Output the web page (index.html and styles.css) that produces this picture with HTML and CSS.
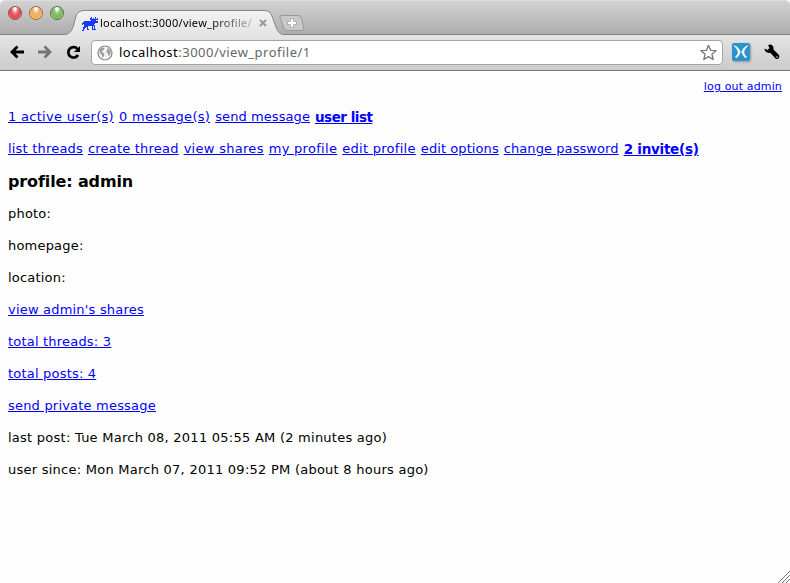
FILE: index.html
```html
<!DOCTYPE html>
<html lang="en">
<head>
<meta charset="utf-8">
<title>localhost:3000/view_profile/1</title>
<link rel="stylesheet" href="styles.css">
</head>
<body>
<header class="chrome">
  <div class="tabstrip">
    <div class="lights"><i class="light red"></i><i class="light amber"></i><i class="light green"></i></div>
    <div class="tab">
      <svg class="tab-shape" width="220" height="26" viewBox="0 0 220 26">
        <defs><linearGradient id="tabfill" x1="0" y1="0" x2="0" y2="1"><stop offset="0" stop-color="#f2f2f2"/><stop offset="1" stop-color="#e4e4e4"/></linearGradient></defs>
        <path d="M0 24.5C5 24.5 7 22 9 17L12 6Q14 .5 20 .5H200Q206 .5 208 6L212 17C214 22 216 24.5 220 24.5V26H0Z" fill="url(#tabfill)"/>
        <path d="M0 24.5C5 24.5 7 22 9 17L12 6Q14 .5 20 .5H200Q206 .5 208 6L212 17C214 22 216 24.5 220 24.5" fill="none" stroke="#858585"/>
      </svg>
      <svg class="moose" width="16" height="14" viewBox="0 0 16 14" fill="#1739ef" shape-rendering="crispEdges"><path d="M9 0h1v2h1V1h1v1h1V0h1v2h1V1h1v2h-2v1h2v2h-3v1h-1v2h-1v3h1v1h-2v-4H6v1H4v1H3v1H2v2H0v-1h1v-3h1V7H1v1H0V6h1V5h1V4h7V3H8V1h1z"/><path d="M5 9h1v3h1v1H5zM12 8h1v4h1v1h-2z"/></svg>
      <span class="tab-title">localhost:3000/view_profile/</span>
      <svg class="close" width="8" height="8" viewBox="0 0 8 8"><path d="M1 1l6 6M7 1L1 7" stroke="#999" stroke-width="2"/></svg>
    </div>
    <svg class="newtab" width="27" height="17" viewBox="0 0 27 17"><path d="M3 .5H19Q21.500 .5 22.500 3L24.500 12Q25 15.500 23 15.500H9Q6 15.500 5 13L1 3Q0 .5 3 .5Z" fill="#c9c9c9" stroke="#999"/><path d="M13 3.500v9M8.500 8h9" stroke="#999" stroke-width="4"/><path d="M13 4v8M9 8h8" stroke="#fff" stroke-width="2.500"/></svg>
  </div>
  <div class="toolbar">
    <svg class="nav back" width="15" height="14" viewBox="0 0 15 14"><path d="M7.500 1.500L2 7l5.500 5.500M2.500 7H14" fill="none" stroke="#000" stroke-width="2.800"/></svg>
    <svg class="nav forward" width="15" height="14" viewBox="0 0 15 14"><path d="M7.500 1.500L13 7l-5.500 5.500M12.500 7H1" fill="none" stroke="#747474" stroke-width="2.800"/></svg>
    <svg class="nav reload" width="15" height="15" viewBox="0 0 15 15"><path d="M11.500 4A5.200 5.200 0 1 0 12 10" fill="none" stroke="#000" stroke-width="2.700"/><path d="M14 1V7H8Z"/></svg>
    <div class="address">
      <svg width="16" height="16" viewBox="0 0 16 16"><circle cx="8" cy="8" r="7" fill="#f4f4f4" stroke="#858585" stroke-width="1.200"/><path d="M2.500 4.500L5 2.500l2.500.5-.5 2-2 1 .5 1.500 2 1L7 11l-1.500 2-.8-3-2-2ZM10 3l2.500 1L14 7l-1 3-1.500 1L10.500 8 9 6.500l1.500-1.500Z" fill="#a0a0a0"/></svg>
      <span class="url"><b>localhost</b>:3000/view_profile/1</span>
      <svg class="star" width="17" height="17" viewBox="0 0 17 17"><path d="M8.500 1.300l2.100 5 5.400.4-4.100 3.500 1.300 5.300-4.700-2.900-4.700 2.900 1.300-5.300L1 6.700l5.400-.4Z" fill="#fff" stroke="#777" stroke-width="1.300" stroke-linejoin="round"/></svg>
    </div>
    <svg class="extension" width="18" height="18" viewBox="0 0 18 18"><rect width="18" height="18" rx="2" fill="#2994ca"/><path d="M2 2.500Q7 4 8.300 9Q7.500 12.500 4.500 15L3.500 13.500Q6 12 6.300 9Q5 5.500 2 2.500ZM16 2.500Q11 4 9.700 9Q10.500 12.500 13.500 15L14.500 13.500Q12 12 11.700 9Q13 5.500 16 2.500Z" fill="#fff" stroke="#fff" stroke-width=".5"/></svg>
    <svg class="wrench" width="16" height="16" viewBox="0 0 16 16"><path d="M4 1L7 .5Q10 2 9.500 5.500L15 11Q16 13 14.500 14.500Q13 15.500 11.500 14.500L6.500 9Q3 9.500 1 7L.5 4.500L3.500 6L5.500 4Z"/><circle cx="13" cy="13" r=".8" fill="#ddd"/></svg>
  </div>
</header>
<main class="page">
  <div class="account"><a href="#">log out admin</a></div>
  <nav class="links"><a href="#" class="wide">1 active user(s)</a><a href="#" class="wide">0 message(s)</a><a href="#" class="snug">send message</a><a href="#" class="strong">user list</a></nav>
  <nav class="links"><a href="#">list threads</a><a href="#">create thread</a><a href="#" class="wide">view shares</a><a href="#" class="wide">my profile</a><a href="#" class="wide">edit profile</a><a href="#" class="snug">edit options</a><a href="#" class="snug">change password</a><a href="#" class="strong invites">2 invite(s)</a></nav>
  <h1>profile: admin</h1>
  <p>photo:</p>
  <p>homepage:</p>
  <p>location:</p>
  <p><a href="#">view admin's shares</a></p>
  <p><a href="#">total threads: 3</a></p>
  <p><a href="#">total posts: 4</a></p>
  <p><a href="#">send private message</a></p>
  <p class="date">last post: Tue March 08, 2011 05:55 AM (2 minutes ago)</p>
  <p class="date">user since: Mon March 07, 2011 09:52 PM (about 8 hours ago)</p>
</main>
<svg class="grip" width="12" height="12" viewBox="0 0 12 12"><path d="M0 12L12 0M4 12l8-8M8 12l4-4" stroke="#777" stroke-width="1"/></svg>
</body>
</html>
```
FILE: styles.css
```css
* { box-sizing: border-box; }
body { margin: 0; height: 583px; overflow: hidden; background: #fefefe; color: #000; font: 13px/16px "DejaVu Sans", Verdana, sans-serif; letter-spacing: .2px; }
svg { display: block; flex: none; }
.chrome { height: 71px; background: #fefefe; }
.tabstrip { display: flex; height: 35px; border-radius: 5px 5px 0 0; background: linear-gradient(#d2d2d2, #acacac); border-top: 1px solid #ddd; box-shadow: inset 0 -1px #858585; }
.lights { display: flex; gap: 7px; padding: 5px 0 0 8px; width: 67px; }
.light { width: 14px; height: 14px; border-radius: 50%; border: 1px solid #777; }
.red { background: radial-gradient(ellipse at 50% 12%, #fff 0 12%, #ee7a80 32%, #e14550 58%, #ffa5a5); border-color: #934b4b; }
.amber { background: radial-gradient(ellipse at 50% 12%, #fff 0 12%, #f0b67c 32%, #efac56 58%, #ffed91); border-color: #976c43; }
.green { background: radial-gradient(ellipse at 50% 12%, #fff 0 12%, #9cc783 32%, #74b558 58%, #c8f09b); border-color: #54753f; }
.tab { position: relative; display: flex; width: 220px; height: 26px; margin: 9px 0 0 -3px; padding-left: 17px; }
.tab-shape { position: absolute; left: 0; top: 0; }
.moose { position: relative; margin: 7px 0 0 1px; }
.tab-title { position: relative; width: 153px; margin-left: 2px; font: 11px/26px "Noto Sans", sans-serif; letter-spacing: .28px; white-space: nowrap; background: linear-gradient(90deg, #000 110px, #bbb 153px); background-clip: text; color: transparent; }
.close { position: relative; margin: 9px 0 0 6px; }
.newtab { margin: 14px 0 0 -5px; }
.toolbar { display: flex; height: 36px; background: linear-gradient(#e4e4e4, #cbcbcb); border-bottom: 1px solid #777; padding-left: 10px; }
.nav { margin-top: 10px; }
.forward { margin-left: 12px; }
.reload { margin: 10px 0 0 14px; }
.address { display: flex; align-items: center; width: 632px; height: 25px; margin: 5px 0 0 10px; padding: 0 5px; border: 1px solid #a5a5a5; border-radius: 4px; background: #fff; }
.url { flex: 1; margin-left: 6px; color: #666; font: 13px/22px "Noto Sans", sans-serif; letter-spacing: .48px; padding-bottom: 2px; }
.url b { color: #000; font-weight: normal; }
.extension { margin: 8px 0 0 9px; filter: drop-shadow(1px 1px 1px #999); }
.wrench { margin: 9px 0 0 14px; }
.page { padding: 9px 8px 0; }
.account { height: 13px; font-size: 11px; line-height: 14px; text-align: right; }
.account a { letter-spacing: .15px; }
.links { display: flex; gap: 5px; height: 16px; margin: 16px 0; white-space: nowrap; }
a { color: #0000ff; text-decoration: underline; }
.wide { letter-spacing: .29px; }
.snug { letter-spacing: .08px; }
.strong { font-weight: bold; font-size: 13.5px; letter-spacing: -.5px; }
.invites { letter-spacing: -.25px; }
h1 { margin: 0; font-size: 16px; line-height: 18px; letter-spacing: -.13px; }
p { margin: 16px 0; }
h1 + p { margin-top: 15px; }
.date { letter-spacing: .25px; }
.grip { position: absolute; right: 0; bottom: 0; }
```
